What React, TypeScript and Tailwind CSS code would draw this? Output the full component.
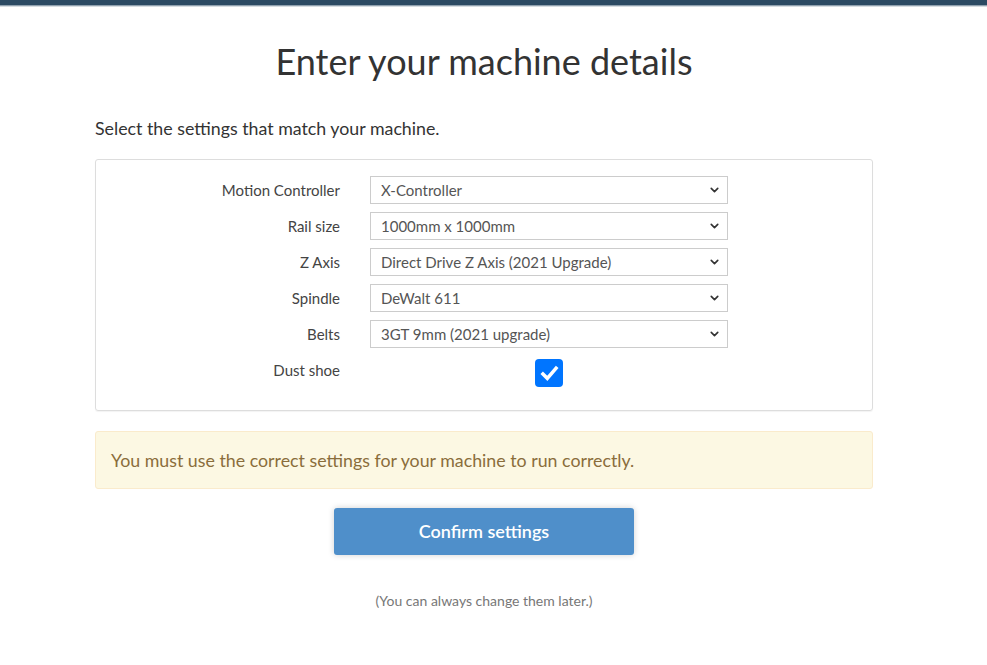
import { ChevronDown } from 'lucide-react';

const ROWS = [
  { label: 'Motion Controller', value: 'X-Controller' },
  { label: 'Rail size', value: '1000mm x 1000mm' },
  { label: 'Z Axis', value: 'Direct Drive Z Axis (2021 Upgrade)' },
  { label: 'Spindle', value: 'DeWalt 611' },
  { label: 'Belts', value: '3GT 9mm (2021 upgrade)' },
];

function SelectRow({ label, value }: { label: string; value: string }) {
  return (
    <div className="flex items-center h-7">
      <label className="w-[244px] shrink-0 text-right text-[15px] text-[#444]">{label}</label>
      <div className="relative ml-[30px] w-[358px] h-7">
        <select
          defaultValue={value}
          className="w-full h-full appearance-none border border-[#ccc] bg-white pl-[10px] pr-8 text-[15px] text-[#555] outline-none"
          style={{ fontFamily: 'Lato, "Open Sans", sans-serif' }}
        >
          <option>{value}</option>
        </select>
        <ChevronDown
          className="pointer-events-none absolute right-[7px] top-1/2 -translate-y-1/2 w-[13px] h-[13px] text-[#333]"
          strokeWidth={3}
        />
      </div>
    </div>
  );
}

export default function App() {
  return (
    <div className="min-h-screen bg-white" style={{ fontFamily: 'Lato, "Open Sans", sans-serif' }}>
      <div className="h-[5px] bg-[#2c4a63]" />
      <div className="h-[1px] bg-[#8fa0ae]" />
      <div className="h-[1px] bg-[#d6dce1]" />

      <div className="w-[968px]">
        <div className="mx-auto w-[778px]">
          <h1 className="mt-[32px] text-center text-[36px] leading-[44px] text-[#333]">
            Enter your machine details
          </h1>

          <p className="mt-[32px] text-[17.8px] leading-[26px] text-[#333]">
            Select the settings that match your machine.
          </p>

          <div className="mt-[18px] rounded-[3px] border border-[#ddd] pt-4 pb-[23px] shadow-[0_1px_1px_rgba(0,0,0,0.05)]">
            <div className="flex flex-col gap-2">
              {ROWS.map((r) => (
                <SelectRow key={r.label} label={r.label} value={r.value} />
              ))}
              <div className="flex items-center h-7 mt-[3px]">
                <span className="w-[244px] shrink-0 text-right text-[15px] text-[#444] -mt-[6px]">Dust shoe</span>
                <div className="ml-[30px] w-[358px] flex justify-center">
                  <div className="w-7 h-7 rounded-[4px] bg-[#0075ff] flex items-center justify-center">
                    <svg viewBox="0 0 24 24" className="w-[21px] h-[21px]" fill="none" stroke="white" strokeWidth={4} strokeLinecap="square">
                      <path d="M4.5 12.5l5 5L19.5 6" />
                    </svg>
                  </div>
                </div>
              </div>
            </div>
          </div>

          <div className="mt-[20px] rounded-[3px] border border-[#faebcc] bg-[#fcf8e3] px-[15px] pt-[16px] pb-[15px] text-[17.8px] leading-[25px] text-[#8a6d3b]">
            You must use the correct settings for your machine to run correctly.
          </div>

          <div className="mt-[19px] flex justify-center">
            <button className="w-[300px] h-[47px] rounded-[3px] bg-[#4f8fca] text-[18px] font-semibold text-white shadow-[0_0_6px_rgba(0,0,0,0.18)]">
              Confirm settings
            </button>
          </div>

          <p className="mt-[35px] text-center text-[14px] text-[#777]">(You can always change them later.)</p>
        </div>
      </div>
    </div>
  );
}
